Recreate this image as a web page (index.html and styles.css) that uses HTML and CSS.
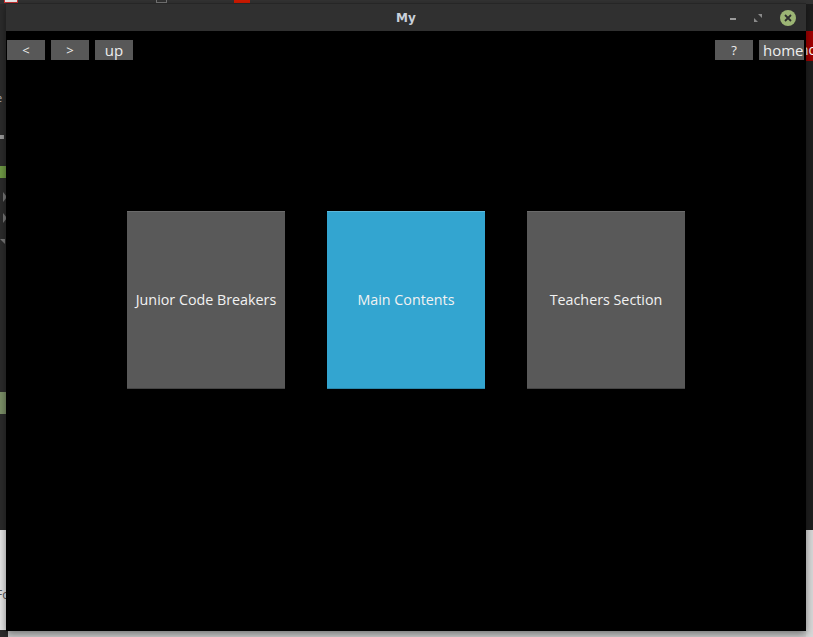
FILE: index.html
```html
<!DOCTYPE html>
<html lang="en">
<head>
    <meta charset="UTF-8">
    <meta name="viewport" content="width=device-width, initial-scale=1.0">
    <title>My</title>
    <link rel="stylesheet" href="styles.css">
</head>
<body>
    <div class="desktop">
        <!-- windows behind the app -->
        <div class="back-win left-win">
            <span class="lw-glyph">e</span>
            <span class="lw-dot"></span>
            <span class="lw-green"></span>
            <span class="lw-arrow a1"></span>
            <span class="lw-arrow a2"></span>
            <span class="lw-down"></span>
            <span class="lw-green big"></span>
            <span class="lw-light">Fo</span>
        </div>
        <div class="back-win right-win">
            <span class="rw-red">nd</span>
            <span class="rw-light"></span>
        </div>
        <div class="top-strip">
            <span class="ts-icon i1"></span>
            <span class="ts-icon i2"></span>
            <span class="ts-icon i3"></span>
        </div>

        <div class="app-window">
            <div class="titlebar">
                <span class="title">My</span>
                <div class="win-controls">
                    <span class="ctl-min"></span>
                    <svg class="ctl-max" width="8" height="8" viewBox="0 0 8 8">
                        <path d="M4 0h4v4zM0 4l4 4H0z" fill="#8a8a8a"/>
                    </svg>
                    <span class="ctl-close">
                        <svg width="8" height="8" viewBox="0 0 8 8">
                            <path d="M1 1l6 6M7 1l-6 6" stroke="#2e2e2e" stroke-width="1.8"/>
                        </svg>
                    </span>
                </div>
            </div>

            <div class="screen">
                <div class="toolbar">
                    <div class="nav-group">
                        <button class="nav-btn">&lt;</button>
                        <button class="nav-btn">&gt;</button>
                        <button class="nav-btn big">up</button>
                    </div>
                    <div class="nav-group">
                        <button class="nav-btn">?</button>
                        <button class="nav-btn big home">home</button>
                    </div>
                </div>

                <div class="tiles">
                    <div class="tile">Junior Code Breakers</div>
                    <div class="tile active">Main Contents</div>
                    <div class="tile">Teachers Section</div>
                </div>
            </div>
        </div>
    </div>
</body>
</html>
```

FILE: styles.css
```css
* {
    margin: 0;
    padding: 0;
    box-sizing: border-box;
}

body {
    background: #d4d4d4;
    font-family: "Open Sans", "DejaVu Sans", sans-serif;
    overflow: hidden;
}

.desktop {
    position: relative;
    width: 813px;
    height: 637px;
    background: #cfcfcf;
}

/* background windows */
.back-win {
    position: absolute;
    overflow: hidden;
}

.left-win {
    left: 0;
    top: 0;
    width: 8px;
    height: 637px;
    background: #2b2b2b;
}

.left-win span {
    position: absolute;
    display: block;
}

.lw-glyph {
    top: 90px;
    left: -4px;
    color: #bbb;
    font-size: 11px;
}

.lw-dot {
    top: 135px;
    left: 0;
    width: 4px;
    height: 4px;
    background: #9a9a9a;
}

.lw-green {
    top: 166px;
    left: 0;
    width: 7px;
    height: 12px;
    background: #6f9a45;
}

.lw-green.big {
    top: 392px;
    height: 22px;
    background: #7c9068;
}

.lw-arrow {
    left: 3px;
    width: 0;
    height: 0;
    border-top: 5px solid transparent;
    border-bottom: 5px solid transparent;
    border-left: 4px solid #777;
}

.a1 { top: 192px; }
.a2 { top: 213px; }

.lw-down {
    top: 239px;
    left: 0;
    border-left: 5px solid transparent;
    border-top: 5px solid #777;
}

.lw-light {
    top: 530px;
    left: 0;
    width: 8px;
    height: 100px;
    background: #e6e6e6;
    color: #555;
    font-size: 12px;
    line-height: 130px;
    text-indent: -4px;
}

.right-win {
    left: 806px;
    top: 0;
    width: 7px;
    height: 637px;
    background: #1e1e1e;
}

.rw-red {
    position: absolute;
    top: 31px;
    left: 0;
    width: 7px;
    height: 30px;
    background: #a10000;
    color: #fff;
    font-size: 14px;
    line-height: 38px;
    text-indent: -6px;
    white-space: nowrap;
}

.rw-light {
    position: absolute;
    top: 530px;
    left: 0;
    width: 7px;
    height: 107px;
    background: #d8d8d8;
}

.top-strip {
    position: absolute;
    left: 0;
    top: 0;
    width: 813px;
    height: 4px;
    background: #333;
}

.ts-icon {
    position: absolute;
    top: 0;
    height: 3px;
}

.i1 { left: 4px; width: 14px; background: #eee; border: 1px solid #c33; border-top: none; }
.i2 { left: 156px; width: 11px; border: 1px solid #777; border-top: none; }
.i3 { left: 234px; width: 16px; background: #d21a00; }

/* app window */
.app-window {
    position: absolute;
    left: 6px;
    top: 3px;
    width: 800px;
    height: 628px;
    display: flex;
    flex-direction: column;
    box-shadow: 0 3px 8px rgba(0, 0, 0, 0.45);
}

.titlebar {
    height: 28px;
    background: #303030;
    border-top: 1px solid #262626;
    display: flex;
    align-items: center;
    justify-content: center;
    position: relative;
}

.title {
    color: #c9d0da;
    font-family: "DejaVu Sans", sans-serif;
    font-weight: bold;
    font-size: 12px;
}

.win-controls {
    position: absolute;
    right: 10px;
    top: 6px;
    display: flex;
    align-items: center;
    gap: 18px;
}

.ctl-min {
    width: 6px;
    height: 2px;
    background: #9a9a9a;
    margin-top: 1px;
}

.ctl-close {
    width: 16px;
    height: 16px;
    border-radius: 50%;
    background: #9cb574;
    display: flex;
    align-items: center;
    justify-content: center;
}

.screen {
    flex: 1;
    background: #000;
    display: flex;
    flex-direction: column;
}

.toolbar {
    display: flex;
    justify-content: space-between;
    padding: 9px 2px 0 1px;
}

.nav-group {
    display: flex;
    gap: 6px;
}

.nav-btn {
    width: 38px;
    height: 20px;
    background: #585858;
    border: none;
    color: #eee;
    font-family: "Open Sans", "DejaVu Sans", sans-serif;
    font-size: 13px;
    line-height: 20px;
}

.nav-btn.big {
    font-size: 15px;
}

.nav-btn.home {
    width: 45px;
    text-align: left;
    padding-left: 4px;
    white-space: nowrap;
    overflow: hidden;
}

.tiles {
    display: flex;
    justify-content: center;
    gap: 42px;
    margin-top: 151px;
}

.tile {
    width: 158px;
    height: 178px;
    background: #595959;
    border-top: 1px solid #6a6a6a;
    border-bottom: 1px solid #444;
    display: flex;
    align-items: center;
    justify-content: center;
    padding-bottom: 1px;
    color: #f2f2f2;
    font-size: 14.3px;
    white-space: nowrap;
}

.tile.active {
    background: #33a5d0;
    border-top-color: #5ab8dc;
    border-bottom-color: #2a87ab;
}
```
